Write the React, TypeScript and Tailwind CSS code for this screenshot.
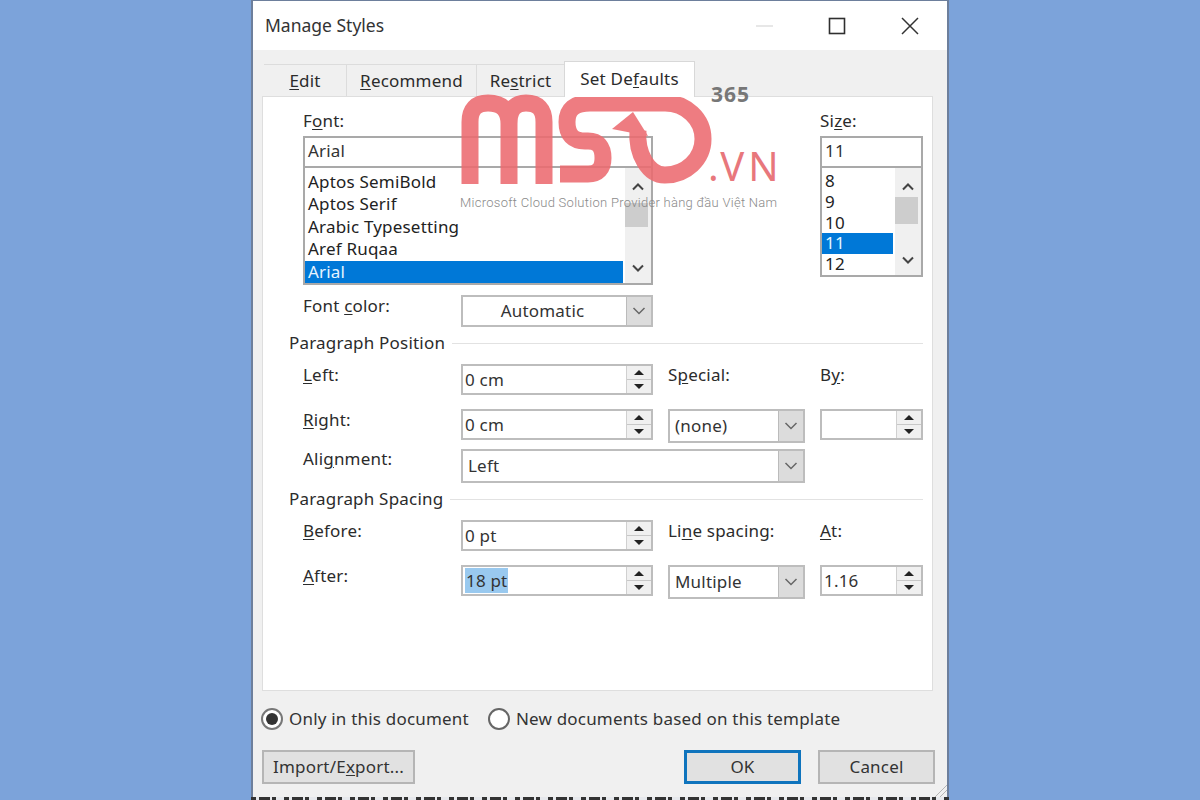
import type { ReactNode } from 'react';

const ROW = 'grid grid-cols-[158px_192px_15px_137px_15px_103px]';

// label with its access key underlined
const Key = ({ pre = '', k, post = '' }: { pre?: string; k: string; post?: string }) => (
  <span className="leading-[22px] text-[#2b2b2b]">
    {pre}
    <span className="underline underline-offset-2">{k}</span>
    {post}
  </span>
);

const Chevron = ({ up = false }: { up?: boolean }) => (
  <svg width="14" height="9" viewBox="0 0 14 9" fill="none" stroke="#444" strokeWidth="2" className="shrink-0">
    <path d={up ? 'M2 7.500 7 2.500l5 5' : 'M2 1.500l5 5 5-5'} />
  </svg>
);

const Spin = ({ value, selected = false }: { value?: string; selected?: boolean }) => (
  <div className="flex h-[31px] items-stretch border-2 border-[#bdbdbd] bg-white">
    <div className="flex min-w-0 flex-1 items-center pl-[2px] text-[#333]">
      {selected ? <span className="bg-[#99c9ef] px-[1px]">{value}</span> : value}
    </div>
    <div className="flex w-[25px] flex-col border-l border-[#d0d0d0] bg-[#f0f0f0]">
      <div className="flex h-[14px] items-center justify-center border-b border-[#c8c8c8]">
        <svg width="10" height="5" viewBox="0 0 10 5"><path d="M5 0 10 5H0z" fill="#222" /></svg>
      </div>
      <div className="flex flex-1 items-center justify-center">
        <svg width="10" height="5" viewBox="0 0 10 5"><path d="M0 0h10L5 5z" fill="#222" /></svg>
      </div>
    </div>
  </div>
);

const Select = ({ value, center = false, tall = 34 }: { value?: string; center?: boolean; tall?: number }) => (
  <div className={`flex items-stretch border-2 border-[#bdbdbd] bg-white ${tall === 32 ? 'h-[32px]' : 'h-[34px]'}`}>
    <div className={`flex flex-1 items-center text-[#333] ${center ? 'justify-center pr-1' : 'pl-[5px]'}`}>{value}</div>
    <div className="flex w-[25px] items-center justify-center border-l border-[#bbbbbb] bg-[#dcdcdc]">
      <svg width="14" height="8" viewBox="0 0 14 8" fill="none" stroke="#666" strokeWidth="1.500"><path d="M1.500 1 7 6.500 12.500 1" /></svg>
    </div>
  </div>
);

const ListBox = ({ h, barTop, barH, sel, selW, items, className }: { h: string; barTop: string; barH: string; sel: number; selW: string; items: string[]; className: string }) => (
  <div className={`flex border-2 border-t-0 border-[#a9a9a9] bg-white ${h}`}>
    <div className={`flex-1 pl-[2px] pt-[3px] ${className}`}>
      {items.map((item, i) => (
        <div key={item} className={`pl-[1px] text-[#222] ${i === sel ? `bg-[#0078d7] !text-[#e6f4ff] ${selW}` : ''}`}>{item}</div>
      ))}
    </div>
    <div className="flex w-[26px] flex-col items-center bg-[#f0f0f0] pb-[10px] pt-[14px]">
      <Chevron up />
      <div className={`w-[23px] self-start bg-[#cdcdcd] ${barTop} ${barH}`} />
      <div className="flex-1" />
      <Chevron />
    </div>
  </div>
);

const Heading = ({ children }: { children: ReactNode }) => (
  <div className="-ml-[14px] flex h-[20px] w-[634px] items-center">
    <span className="text-[#2b2b2b]">{children}</span>
    <div className="ml-[7px] h-[1px] flex-1 bg-[#e2e2e2]" />
  </div>
);

const Btn = ({ children, w, focus = false }: { children: ReactNode; w: string; focus?: boolean }) => (
  <button className={`flex h-[34px] items-center justify-center text-[#333] ${w} ${focus ? 'border-[3px] border-[#0f74bd] bg-[#e1e1e1]' : 'border-2 border-[#b5b5b5] bg-[#e1e1e1]'}`}>
    {children}
  </button>
);

// translucent MSO 365 watermark, drawn in page coordinates through the viewBox
const Watermark = () => (
  <div className="pointer-events-none absolute left-0 top-0">
    <svg width="340" height="130" viewBox="450 85 340 130" className="absolute left-[197px] top-[84px]" fill="none" stroke="#ec6b70" strokeWidth="17" opacity="0.88">
      <path d="M470 184V122Q470 103 488 103Q509 103 509 124V184M509 124Q509 103 526 103Q544 103 544 122V184" />
      <path d="M560 174H588Q603 174 603 158Q603 141 588 141H585Q567 141 567 122Q567 103 590 103H665A38 36 0 0 1 665 175A27 40 0 0 1 638 130" />
      <path d="M633 112 612 129 648 136z" fill="#ec6b70" stroke="none" />
    </svg>
    <span className="absolute left-[458px] top-[79px] text-[21px] font-bold leading-[28px] tracking-[1px] text-[#777]">365</span>
    <span className="absolute left-[455px] top-[145px] text-[40px] leading-[40px] tracking-[4px] text-[#e8777c]">.VN</span>
    <span className="absolute left-[207px] top-[193px] whitespace-nowrap font-['Roboto',sans-serif] text-[13px] font-light leading-[18px] tracking-[0.28px] text-[#8a8a8a]">
      Microsoft Cloud Solution Provider hàng đầu Việt Nam
    </span>
  </div>
);

export default function App() {
  return (
    <div className="h-[800px] w-[1200px] overflow-hidden bg-[#7ca3da] pl-[251px] font-['Noto_Sans',sans-serif] text-[17px] tracking-[0.2px]">
      <div className="relative h-[797px] w-[698px] border-x-2 border-t border-[#6d7f9c] bg-[#f0f0f0]">
        {/* title bar */}
        <div className="flex h-[49px] items-center bg-white pl-[12px]">
          <span className="flex-1 text-[17.500px] tracking-normal text-[#333]">Manage Styles</span>
          <svg width="17" height="2" viewBox="0 0 17 2" className="mr-[55px]"><path d="M0 1h17" stroke="#cfcfcf" strokeWidth="1" /></svg>
          <svg width="18" height="18" viewBox="0 0 18 18" className="mr-[55px]" fill="none" stroke="#2f2f2f" strokeWidth="1.600"><rect x="1.500" y="1.500" width="15" height="15" /></svg>
          <svg width="18" height="18" viewBox="0 0 18 18" className="mr-[28px]" fill="none" stroke="#333" strokeWidth="1.500"><path d="M1 1l16 16M17 1 1 17" /></svg>
        </div>

        {/* tabs */}
        <div className="flex h-[46px] items-end pl-[11px]">
          <div className="flex h-[32px] w-[83px] items-center justify-center border-r border-t border-[#dcdcdc] bg-[#f0f0f0]"><Key k="E" post="dit" /></div>
          <div className="flex h-[32px] w-[130px] items-center justify-center border-r border-t border-[#dcdcdc] bg-[#f0f0f0]"><Key k="R" post="ecommend" /></div>
          <div className="flex h-[32px] w-[87px] items-center justify-center border-t border-[#dcdcdc] bg-[#f0f0f0]"><Key pre="Re" k="s" post="trict" /></div>
          <div className="relative z-10 -mb-[1px] flex h-[36px] w-[131px] items-center justify-center border-x border-t border-[#d8d8d8] bg-white pb-[2px]"><Key pre="Set De" k="f" post="aults" /></div>
        </div>

        {/* tab panel */}
        <div className="ml-[9px] h-[595px] w-[671px] border border-[#dedede] bg-white pl-[40px] pt-[15px]">
          <div className="flow-root h-[24px]">
            <div className="-mt-[2px] flex w-[620px] justify-between leading-[22px]"><Key pre="F" k="o" post="nt:" /><span className="w-[103px]"><Key pre="Si" k="z" post="e:" /></span></div>
          </div>
          <div className="flex w-[620px] justify-between">
            <div className="w-[350px]">
              <div className="flex h-[32px] items-center border-2 border-[#a9a9a9] bg-white pb-[2px] pl-[3px] text-[#333]">Arial</div>
              <ListBox h="h-[117px]" barTop="mt-[12px]" barH="h-[24px]" sel={4} selW="-ml-[2px] w-[318px] pl-[3px]" className="leading-[22.400px]" items={['Aptos SemiBold', 'Aptos Serif', 'Arabic Typesetting', 'Aref Ruqaa', 'Arial']} />
            </div>
            <div className="w-[103px]">
              <div className="flex h-[32px] items-center border-2 border-[#a9a9a9] bg-white pb-[2px] pl-[3px] text-[#333]">11</div>
              <ListBox h="h-[109px]" barTop="mt-[6px]" barH="h-[27px]" sel={3} selW="-ml-[2px] w-[71px] pl-[3px]" className="leading-[20.800px]" items={['8', '9', '10', '11', '12']} />
            </div>
          </div>

          <div className={`${ROW} mt-[10px] h-[32px]`}>
            <div className="-mt-[2px]"><Key pre="Font " k="c" post="olor:" /></div>
            <Select value="Automatic" center tall={32} />
          </div>

          <div className="mt-[6px]"><Heading>Paragraph Position</Heading></div>

          <div className={`${ROW} mt-[11px] h-[45px]`}>
            <div className="-mt-[2px]"><Key k="L" post="eft:" /></div>
            <Spin value="0 cm" />
            <div />
            <div className="-mt-[2px]"><Key pre="S" k="p" post="ecial:" /></div>
            <div />
            <div className="-mt-[2px]"><Key pre="B" k="y" post=":" /></div>
          </div>
          <div className={`${ROW} h-[40px]`}>
            <div className="-mt-[2px]"><Key k="R" post="ight:" /></div>
            <Spin value="0 cm" />
            <div />
            <Select value="(none)" />
            <div />
            <Spin />
          </div>
          <div className={`${ROW} h-[34px]`}>
            <div className="-mt-[3px]"><Key pre="Ali" k="g" post="nment:" /></div>
            <div className="col-span-3"><Select value="Left" /></div>
          </div>

          <div className="mt-[6px]"><Heading>Paragraph Spacing</Heading></div>

          <div className={`${ROW} mt-[11px] h-[45px]`}>
            <div className="-mt-[2px]"><Key k="B" post="efore:" /></div>
            <Spin value="0 pt" />
            <div />
            <div className="-mt-[2px]"><Key pre="Li" k="n" post="e spacing:" /></div>
            <div />
            <div className="-mt-[2px]"><Key k="A" post="t:" /></div>
          </div>
          <div className={`${ROW} h-[34px]`}>
            <div className="-mt-[2px]"><Key k="A" post="fter:" /></div>
            <Spin value="18 pt" selected />
            <div />
            <Select value="Multiple" />
            <div />
            <Spin value="1.16" />
          </div>
        </div>

        {/* apply-to radios */}
        <div className="ml-[8px] mt-[17px] flex h-[22px] items-center text-[#333]">
          <div className="flex h-[22px] w-[22px] items-center justify-center rounded-full border-2 border-[#777] bg-white">
            <div className="h-[12px] w-[12px] rounded-full bg-[#333]" />
          </div>
          <span className="ml-[6px]">Only in this document</span>
          <div className="ml-[19px] h-[22px] w-[22px] rounded-full border-2 border-[#666] bg-white" />
          <span className="ml-[6px]">New documents based on this template</span>
        </div>

        {/* bottom buttons */}
        <div className="ml-[9px] mt-[20px] flex h-[34px] w-[673px] items-center">
          <Btn w="w-[153px]"><span>Import/E<span className="underline underline-offset-2">x</span>port...</span></Btn>
          <div className="flex-1" />
          <Btn w="w-[117px]" focus>OK</Btn>
          <div className="w-[17px]" />
          <Btn w="w-[117px]">Cancel</Btn>
        </div>

        {/* resize grip */}
        <svg width="13" height="13" viewBox="0 0 13 13" className="absolute bottom-0 right-0" fill="none" stroke="#b5b5b5"><path d="M13 1 1 13M13 6l-7 7" /></svg>

        <Watermark />
      </div>
      {/* bit of the document showing under the dialog */}
      <div className="h-[3px] w-[698px] bg-[repeating-linear-gradient(90deg,#333_0_5px,#e6e8ec_5px_8px,#333_8px_19px,#e6e8ec_19px_21px,#333_21px_25px,#e6e8ec_25px_33px)]" />
    </div>
  );
}
